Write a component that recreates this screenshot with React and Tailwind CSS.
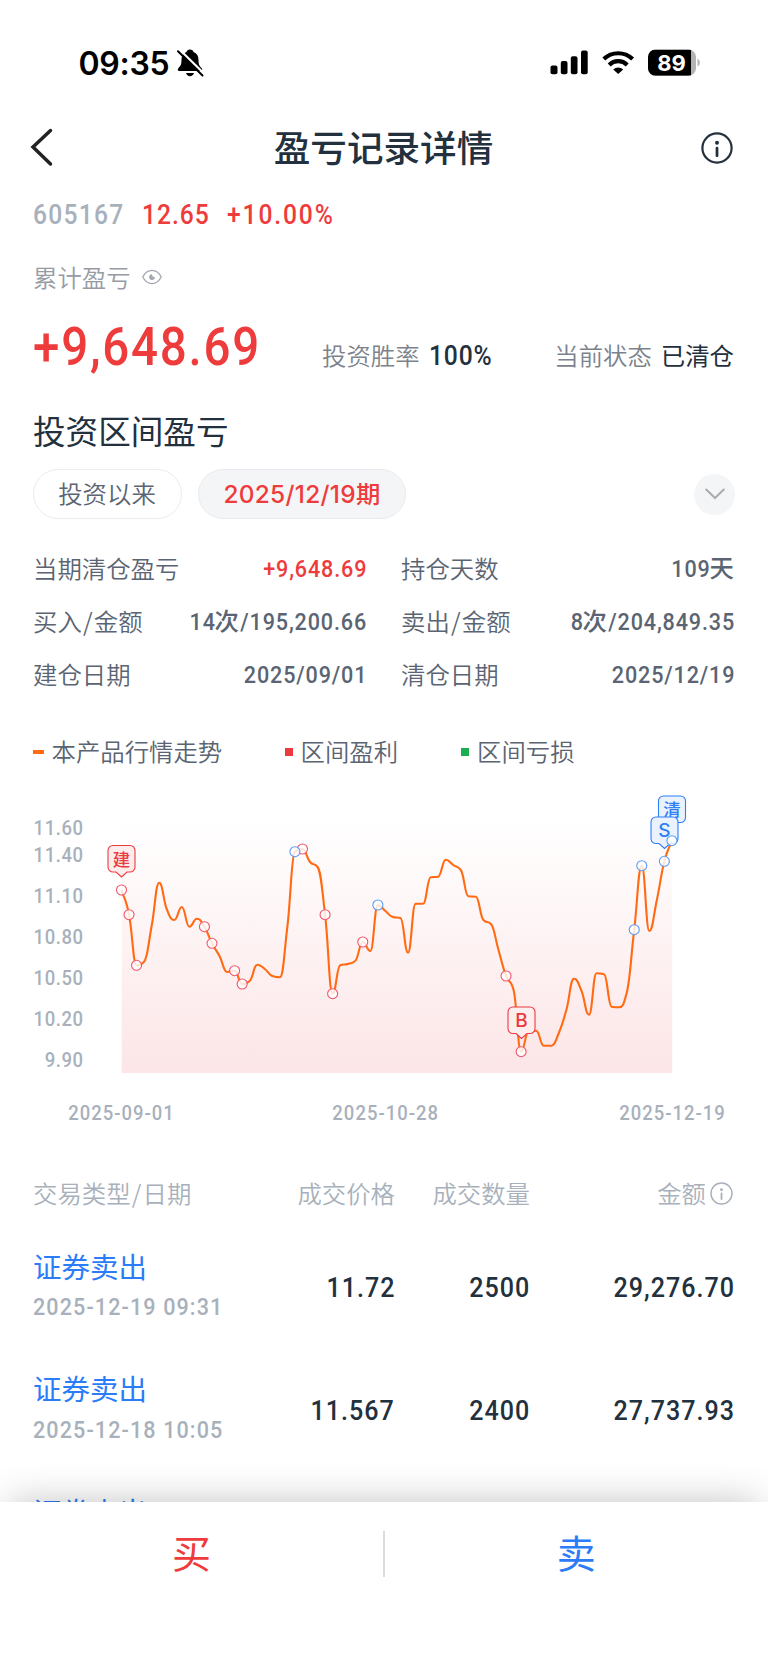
import React from "react";

const CJK = "font-['Noto_Sans_CJK_SC',sans-serif]";
const NUM = "font-['Roboto','Noto_Sans_CJK_SC',sans-serif]";

/* Closing price positions, one per trading day */
const ys = [
  890, 914.7, 965.3, 961.7, 926, 882.7, 909, 920, 907, 926.7, 918.7, 926.7, 943.3, 956, 972, 970.7, 984, 981, 964.7,
  969, 976, 977.3, 926.7, 851.7, 849, 862, 867, 914.7, 993.7, 965.3, 964, 961, 942, 951, 905, 911, 917, 918, 952.7,
  903.7, 903.7, 877.3, 876.7, 859.7, 865, 870, 896.3, 896.7, 920, 924, 950, 976, 990, 1051.7, 1031, 1030.7, 1045.7,
  1045.7, 1033, 1010, 978.7, 990.7, 1014.7, 973.3, 974.3, 1006.7, 1007.3, 993, 929.7, 865.7, 931, 900, 861.3, 840.7,
];
const TOP = 780;
const STEP = 7.54;
const pts = ys.map((y, i) => [121.5 + i * STEP, y - TOP]);

function monotone(p) {
  const n = p.length;
  const d = [];
  for (let i = 0; i < n - 1; i++) d.push((p[i + 1][1] - p[i][1]) / STEP);
  const m = p.map((_, i) => {
    if (i === 0) return d[0];
    if (i === n - 1) return d[n - 2];
    const a = d[i - 1];
    const b = d[i];
    if (a * b <= 0) return 0;
    return Math.sign(a) * Math.min(Math.abs(a), Math.abs(b), Math.abs(a + b) / 4) * 2;
  });
  let s = `M${p[0][0]},${p[0][1]}`;
  const h = STEP * 0.46;
  for (let i = 0; i < n - 1; i++) {
    s += `C${p[i][0] + h},${p[i][1] + m[i] * h} ${p[i + 1][0] - h},${p[i + 1][1] - m[i + 1] * h} ${p[i + 1][0]},${p[i + 1][1]}`;
  }
  return s;
}

const line = monotone(pts);
const buys = [0, 1, 2, 11, 12, 15, 16, 24, 27, 28, 32, 51, 53];
const sells = [23, 34, 68, 69, 72, 73];

const yLabels = [
  ["11.60", 827.5],
  ["11.40", 855],
  ["11.10", 896],
  ["10.80", 937],
  ["10.50", 978],
  ["10.20", 1019],
  ["9.90", 1060],
];

/* Condensed figures, anchored at the left or the right edge */
function NumL({ className = "", children }) {
  return <span className={`${NUM} inline-block origin-left scale-x-[0.88] whitespace-nowrap ${className}`}>{children}</span>;
}
function NumR({ className = "", children }) {
  return (
    <span className={`${NUM} -mr-[0.035em] inline-block origin-right scale-x-[0.88] tracking-[0.04em] whitespace-nowrap ${className}`}>
      {children}
    </span>
  );
}

function Callout({ x, y, text, color, fill, size }) {
  return (
    <g transform={`translate(${x},${y - TOP})`}>
      <path
        d="M-8.5,0.5H8.5a5,5 0 0 1 5,5V22a5,5 0 0 1 -5,5H5.5L0,32L-5.5,27H-8.5a5,5 0 0 1 -5,-5V5.500a5,5 0 0 1 5,-5Z"
        fill={fill}
        stroke={color}
        strokeWidth="1.1"
      />
      <text
        x="0"
        y={20.8}
        textAnchor="middle"
        fill={color}
        fontSize={size}
        className="font-['Inter','Noto_Sans_CJK_SC',sans-serif] font-medium"
      >
        {text}
      </text>
    </g>
  );
}

function Dot({ i, color }) {
  return <circle cx={pts[i][0]} cy={pts[i][1]} r="5" fill="#fff" fillOpacity="0.82" stroke={color} strokeWidth="1.1" />;
}

function Chart() {
  return (
    <svg width="768" height="350" viewBox="0 0 768 350" className="block shrink-0">
      <defs>
        <linearGradient id="area" x1="0" y1="40" x2="0" y2="293" gradientUnits="userSpaceOnUse">
          <stop offset="0" stopColor="#e93a45" stopOpacity="0" />
          <stop offset="1" stopColor="#e93a45" stopOpacity="0.13" />
        </linearGradient>
      </defs>
      <rect x="121.700" y="40" width="550.5" height="253" fill="url(#area)" />
      {yLabels.map(([t, y]) => (
        <text
          key={t}
          transform={`translate(83.500,${y - TOP + 7.3}) scale(0.88,1)`}
          textAnchor="end"
          fontSize="21"
          fill="#a8b1bb"
          className={`${NUM} font-medium tracking-[0.03em]`}
        >
          {t}
        </text>
      ))}
      {[
        ["2025-09-01", 121.5],
        ["2025-10-28", 385.7],
        ["2025-12-19", 672.5],
      ].map(([t, x]) => (
        <text
          key={t}
          transform={`translate(${x},340) scale(0.88,1)`}
          textAnchor="middle"
          fontSize="21"
          fill="#a8b1bb"
          className={`${NUM} font-medium tracking-[0.055em]`}
        >
          {t}
        </text>
      ))}
      <path d={line} fill="none" stroke="#ff6a13" strokeWidth="2.1" strokeLinejoin="round" />
      <Callout x={121.5} y={845} text="建" color="#ec3a41" fill="#fdecec" size={17.5} />
      <Callout x={672} y={795.5} text="清" color="#2f7ff5" fill="#eaf2fe" size={17.5} />
      <Callout x={664.5} y={816.5} text="S" color="#2f7ff5" fill="#eaf2fe" size={19} />
      <Callout x={521.5} y={1006.5} text="B" color="#ec3a41" fill="#fdeeee" size={19} />
      {buys.map((i) => (
        <Dot key={i} i={i} color="#f0566a" />
      ))}
      {sells.map((i) => (
        <Dot key={i} i={i} color="#5b9bf3" />
      ))}
    </svg>
  );
}

function InfoIcon({ size, stroke, className }) {
  return (
    <svg width={size} height={size} viewBox="0 0 32 32" fill="none" className={className}>
      <circle cx="16" cy="16" r="14.6" stroke="currentColor" strokeWidth={stroke} />
      <circle cx="16" cy="10.800" r="2" fill="currentColor" />
      <path d="M16 16v7.800" stroke="currentColor" strokeWidth={stroke * 1.25} strokeLinecap="round" />
    </svg>
  );
}

function StatusBar() {
  return (
    <div className="flex h-[112px] items-center pt-[13px] pl-[78.500px]">
      <span className="w-[97.500px] pt-[2px] font-['Inter',sans-serif] text-[32px] leading-none font-semibold tracking-[-0.3px] text-black">
        09:35
      </span>
      <svg width="28" height="30" viewBox="0 0 28 30">
        <path
          d="M14 1.500c-2 0-3.200 1.200-3.500 2.600C7 5.400 5.500 8.300 5.500 12c0 5-1.200 6.300-3.200 8.300-1 1.100-.6 2.700 1 2.700h21.400c1.600 0 2-1.600 1-2.700-2-2-3.200-3.300-3.200-8.300 0-3.700-1.500-6.600-5-7.900C17.200 2.700 16 1.500 14 1.500Z"
          fill="#000"
        />
        <path d="M10 25h8c-.5 2-2 3.200-4 3.200S10.500 27 10 25Z" fill="#000" />
        <path d="M3.500 1.500L28.500 26" stroke="#fff" strokeWidth="2.200" />
        <path d="M2 3.200L26.500 27.500" stroke="#000" strokeWidth="2" strokeLinecap="round" />
      </svg>
      <svg width="160" height="30" viewBox="0 0 160 30" className="ml-[344px] shrink-0">
        <g transform="translate(2.500,0)">
          <rect x="0" y="17.500" width="7" height="8.800" rx="2" />
          <rect x="10.300" y="13" width="6.700" height="13.300" rx="2" />
          <rect x="20.300" y="8.300" width="6.700" height="18" rx="2" />
          <rect x="30.500" y="2.500" width="6.700" height="23.800" rx="2" />
        </g>
        <g transform="translate(70.200,26)">
          <path d="M0,0L-5,-4.600A7.300,7.300 0 0 1 5,-4.600Z" />
          <path d="M-9,-9.100A12.800,12.800 0 0 1 9,-9.100" fill="none" stroke="#000" strokeWidth="4.200" />
          <path d="M-14.400,-14.900A20.700,20.700 0 0 1 14.400,-14.900" fill="none" stroke="#000" strokeWidth="4.200" />
        </g>
        <clipPath id="batt">
          <rect x="100" y="1.500" width="48" height="26.300" rx="7.500" />
        </clipPath>
        <g clipPath="url(#batt)">
          <rect x="100" y="1.500" width="48" height="26.300" fill="#b3b3b3" />
          <rect x="100" y="1.500" width="43" height="26.300" fill="#000" />
        </g>
        <path d="M149.500,10.500a4.500,4.500 0 0 1 0,8Z" fill="#b3b3b3" />
        <text
          x="123.500"
          y="22.600"
          textAnchor="middle"
          fill="#fff"
          fontSize="22"
          className="font-['Inter',sans-serif] font-bold"
        >
          89
        </text>
      </svg>
    </div>
  );
}

/* A "/" inside a label gets a little air on both sides */
function Label({ text }) {
  const [a, b] = text.split("/");
  return (
    <>
      {a}
      {b && <span className="mx-[1.200px]">/</span>}
      {b}
    </>
  );
}

function Stat({ label, children, red }) {
  return (
    <div className="flex h-[53px] items-center justify-between">
      <span className={`${CJK} -mt-[2px] text-[24.4px] leading-none font-[350] text-[#5a6472]`}>
        <Label text={label} />
      </span>
      <span
        className={`${NUM} flex items-baseline justify-end text-[24.5px] leading-none font-medium ${red ? "text-[#ee3b3b]" : "text-[#5a6472]"}`}
      >
        {children}
      </span>
    </div>
  );
}

function Unit({ children }) {
  return <span className={`${CJK} -my-[4px] text-[24.4px] leading-none font-medium`}>{children}</span>;
}

function Legend({ mark, label }) {
  return (
    <div className="flex items-center gap-[8px]">
      <span className={mark} />
      <span className={`${CJK} -mt-[2px] text-[24.4px] leading-none font-[350] text-[#5a6472]`}>{label}</span>
    </div>
  );
}

function Trade({ date, price, qty, amount }) {
  return (
    <div className={`${NUM} flex h-[122.5px] items-center text-[28.5px] leading-none font-medium text-[#23303d]`}>
      <div className="-mt-[5px] flex h-[68px] w-[212px] flex-col justify-between">
        <span className={`${CJK} text-[28.5px] leading-none font-normal text-[#2b7cf7]`}>证券卖出</span>
        <span className="text-[24.500px] leading-none font-medium text-[#a8b1bb]">
          <NumL className="tracking-[0.051em]">{date}</NumL>
        </span>
      </div>
      <span className="flex w-[149px] justify-end">
        <NumR>{price}</NumR>
      </span>
      <span className="flex w-[135px] justify-end">
        <NumR>{qty}</NumR>
      </span>
      <span className="flex w-[205px] justify-end">
        <NumR>{amount}</NumR>
      </span>
    </div>
  );
}

export default function App() {
  return (
    <div className="flex h-[1670px] w-[768px] flex-col overflow-hidden bg-white">
      <StatusBar />

      <header className="grid h-[72px] shrink-0 grid-cols-[1fr_auto_1fr] items-center pr-[35px] pl-[30px]">
        <svg width="24" height="40" viewBox="0 0 24 40" fill="none">
          <path d="M20.500 2.500L3 19l17.500 17" stroke="#222" strokeWidth="3.500" strokeLinecap="round" />
        </svg>
        <h1 className={`${CJK} -mt-[2px] ml-[4px] text-[36.600px] leading-none font-medium text-[#23303d]`}>盈亏记录详情</h1>
        <InfoIcon size={32} stroke={2.2} className="justify-self-end text-[#23303d]" />
      </header>

      <div className="flex h-[60px] shrink-0 items-center pl-[33px] text-[28px] leading-none">
        <span className="w-[109px] font-medium text-[#a8b1bb]">
          <NumL className="tracking-[0.05em]">605167</NumL>
        </span>
        <span className="w-[85px] font-medium text-[#ee3b3b]">
          <NumL className="tracking-[0.04em]">12.65</NumL>
        </span>
        <span className="font-medium text-[#ee3b3b]">
          <NumL className="tracking-[0.075em]">+10.00%</NumL>
        </span>
      </div>

      <div className="flex h-[66px] shrink-0 items-center pl-[33px]">
        <span className={`${CJK} text-[24.400px] leading-none font-[350] text-[#969ba4]`}>累计盈亏</span>
        <svg width="20" height="16" viewBox="0 0 20 16" fill="none" className="ml-[11px]">
          <path
            d="M.8 8C3 3.600 6.200 1.400 10 1.400S17 3.600 19.200 8C17 12.400 13.800 14.600 10 14.600S3 12.400.8 8Z"
            stroke="#a3a8b0"
            strokeWidth="1.300"
          />
          <path d="M10 5.200a2.900 2.900 0 1 0 2.900 2.900L10.700 7.800Z" fill="#a3a8b0" />
        </svg>
      </div>

      <div className="flex h-[78px] shrink-0 items-center pr-[34px] pl-[33px]">
        <span className="-mt-[8px] w-[289px] text-[54px] leading-none font-medium text-[#ee3b3b]">
          <NumL className="tracking-[0.037em]">+9,648.69</NumL>
        </span>
        <div className="flex flex-1 items-baseline justify-between pt-[14px] text-[24.400px] leading-none whitespace-nowrap">
          <span className="flex items-baseline gap-[9px]">
            <span className={`${CJK} font-[350] text-[#7c838d]`}>投资胜率</span>
            <NumL className="text-[28px] leading-none font-medium tracking-[0.035em] text-[#23303d]">100%</NumL>
          </span>
          <span className="flex items-baseline gap-[9px]">
            <span className={`${CJK} font-[350] text-[#7c838d]`}>当前状态</span>
            <span className={`${CJK} text-[#23303d]`}>已清仓</span>
          </span>
        </div>
      </div>

      <h2 className={`${CJK} mt-[26px] flex h-[32px] shrink-0 items-center pl-[33px] text-[32.600px] leading-none text-[#23303d]`}>
        投资区间盈亏
      </h2>

      <div className="mt-[23px] flex h-[50px] shrink-0 items-center pr-[33px] pl-[33px]">
        <button className={`${CJK} h-[50px] w-[149px] rounded-full border border-[#ebecee] pr-[1px] pb-[2px] text-[24.400px] leading-none font-[350] text-[#5a6472]`}>
          投资以来
        </button>
        <button className="ml-[16px] h-[50px] w-[208px] rounded-full border border-[#e9ebee] bg-[#f4f5f7] font-['Inter','Noto_Sans_CJK_SC',sans-serif] text-[24.400px] leading-none font-medium tracking-[0.300px] whitespace-nowrap text-[#ee3b3b]">
          2025/12/19期
        </button>
        <button className="ml-auto flex size-[41px] items-center justify-center rounded-full bg-[#f4f5f7]">
          <svg width="20" height="12" viewBox="0 0 20 12" fill="none">
            <path d="M1.200 1.500L10 10L18.800 1.500" stroke="#a9acb1" strokeWidth="2" strokeLinecap="round" />
          </svg>
        </button>
      </div>

      <div className="mt-[24px] grid shrink-0 grid-cols-[333px_333px] gap-x-[35px] pl-[33px]">
        <Stat label="当期清仓盈亏" red>
          <NumR>+9,648.69</NumR>
        </Stat>
        <Stat label="持仓天数">
          <NumR>109</NumR>
          <Unit>天</Unit>
        </Stat>
        <Stat label="买入/金额">
          <NumR>14</NumR>
          <Unit>次</Unit>
          <span className="flex w-[127px] justify-end">
            <NumR>/195,200.66</NumR>
          </span>
        </Stat>
        <Stat label="卖出/金额">
          <NumR>8</NumR>
          <Unit>次</Unit>
          <span className="flex w-[127px] justify-end">
            <NumR>/204,849.35</NumR>
          </span>
        </Stat>
        <Stat label="建仓日期">
          <NumR>2025/09/01</NumR>
        </Stat>
        <Stat label="清仓日期">
          <NumR>2025/12/19</NumR>
        </Stat>
      </div>

      <div className="mt-[32px] flex h-[36px] shrink-0 items-center pl-[32.500px]">
        <div className="w-[252px]">
          <Legend mark="h-[4px] w-[11px] bg-[#ff6a13]" label="本产品行情走势" />
        </div>
        <div className="w-[176.500px]">
          <Legend mark="size-[8px] bg-[#ea3a3f]" label="区间盈利" />
        </div>
        <Legend mark="size-[8px] bg-[#19ae51]" label="区间亏损" />
      </div>

      <div className="mt-[10px] shrink-0">
        <Chart />
      </div>

      <div className={`${CJK} mt-[44px] flex h-[38px] shrink-0 items-center pl-[33px] text-[24.400px] leading-none font-[350] text-[#a8b1bb]`}>
        <span className="w-[212px]">
          <Label text="交易类型/日期" />
        </span>
        <span className="w-[150px] text-right">成交价格</span>
        <span className="w-[135px] text-right">成交数量</span>
        <span className="flex w-[203px] items-center justify-end gap-[4px]">
          金额
          <InfoIcon size={23} stroke={2} />
        </span>
      </div>

      <div className="mt-[15px] flex h-[275px] flex-col overflow-hidden pl-[33px] *:shrink-0">
        <Trade date="2025-12-19 09:31" price="11.72" qty="2500" amount="29,276.70" />
        <Trade date="2025-12-18 10:05" price="11.567" qty="2400" amount="27,737.93" />
        <Trade date="" price="" qty="" amount="" />
      </div>

      <footer
        className={`${CJK} relative flex h-[168px] shrink-0 items-start bg-white pt-[29px] text-[39px] leading-none shadow-[0_-10px_36px_-10px_rgba(0,0,0,0.24)]`}
      >
        <button className="flex h-[46px] flex-1 items-center justify-center pb-[6px] text-[#ee3b3b]">买</button>
        <span className="h-[46px] w-[1.500px] bg-[#d9dbde]" />
        <button className="flex h-[46px] flex-1 items-center justify-center pb-[6px] text-[#2b7cf7]">卖</button>
      </footer>
    </div>
  );
}
